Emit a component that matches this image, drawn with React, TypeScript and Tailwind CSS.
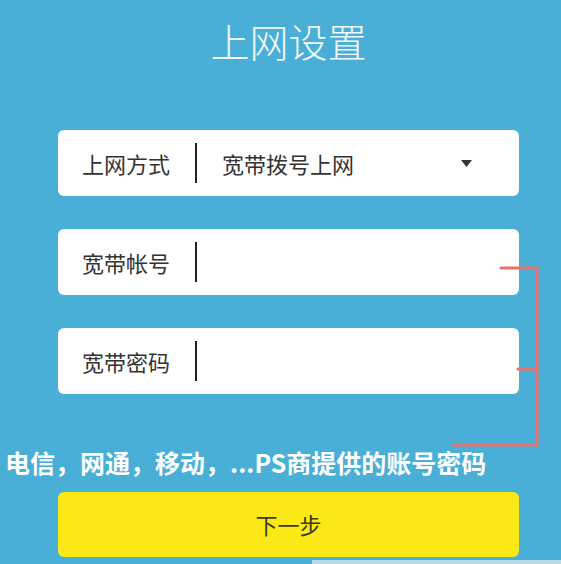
import React from 'react';

const FONT = { fontFamily: '"Noto Sans CJK SC", "Noto Sans", sans-serif' };

const Field: React.FC<{ label: string; value?: string; select?: boolean }> = ({ label, value, select }) => {
    return (
        <div className="ml-[58px] mr-[42px] h-[66px] rounded-[6px] bg-white flex items-center pl-[24px] pr-[47px]">
            <span className="w-[113px] text-[22px] text-[#333] leading-none">{label}</span>
            <span className="w-[2px] h-[40px] bg-[#222]"></span>
            <span className="flex-grow pl-[25px] text-[22px] text-[#333] leading-none">{value}</span>
            {select && (
                <svg width="11" height="7" viewBox="0 0 11 7">
                    <polygon points="0,0 11,0 5.5,7" fill="#333" />
                </svg>
            )}
        </div>
    );
};

const App = () => {
    return (
        <div className="relative w-[561px] h-[564px] overflow-hidden bg-[#4aafd6] flex flex-col" style={FONT}>
            <h1 className="pt-[20px] text-center text-[39px] leading-[41px] text-[#f4f9fb] font-light pl-[16px]">上网设置</h1>

            <div className="mt-[69px] flex flex-col gap-[33px]">
                <Field label="上网方式" value="宽带拨号上网" select />
                <Field label="宽带帐号" />
                <Field label="宽带密码" />
            </div>

            <p className="mt-[55px] pl-[5px] text-[25px] leading-[26px] font-bold text-white">
                电信，网通，移动，...PS商提供的账号密码
            </p>

            <button className="mt-[17px] ml-[58px] mr-[42px] h-[65px] rounded-[6px] bg-[#fbe816] text-[22px] text-[#3a3a1a] flex items-center justify-center">
                下一步
            </button>

            {/* red bracket drawn over the screenshot */}
            <svg className="absolute left-0 top-0 pointer-events-none" width="561" height="564">
                <path d="M501 268 L537 268 L537 445 L453 445" stroke="#e8706d" strokeWidth="3" fill="none" strokeLinecap="round" />
                <path d="M518 369 L537 369" stroke="#e8706d" strokeWidth="3" fill="none" strokeLinecap="round" />
            </svg>

            <div className="absolute left-[312px] right-0 top-[560px] h-[4px] bg-[#b8d8e6]"></div>
        </div>
    );
};

export default App;
